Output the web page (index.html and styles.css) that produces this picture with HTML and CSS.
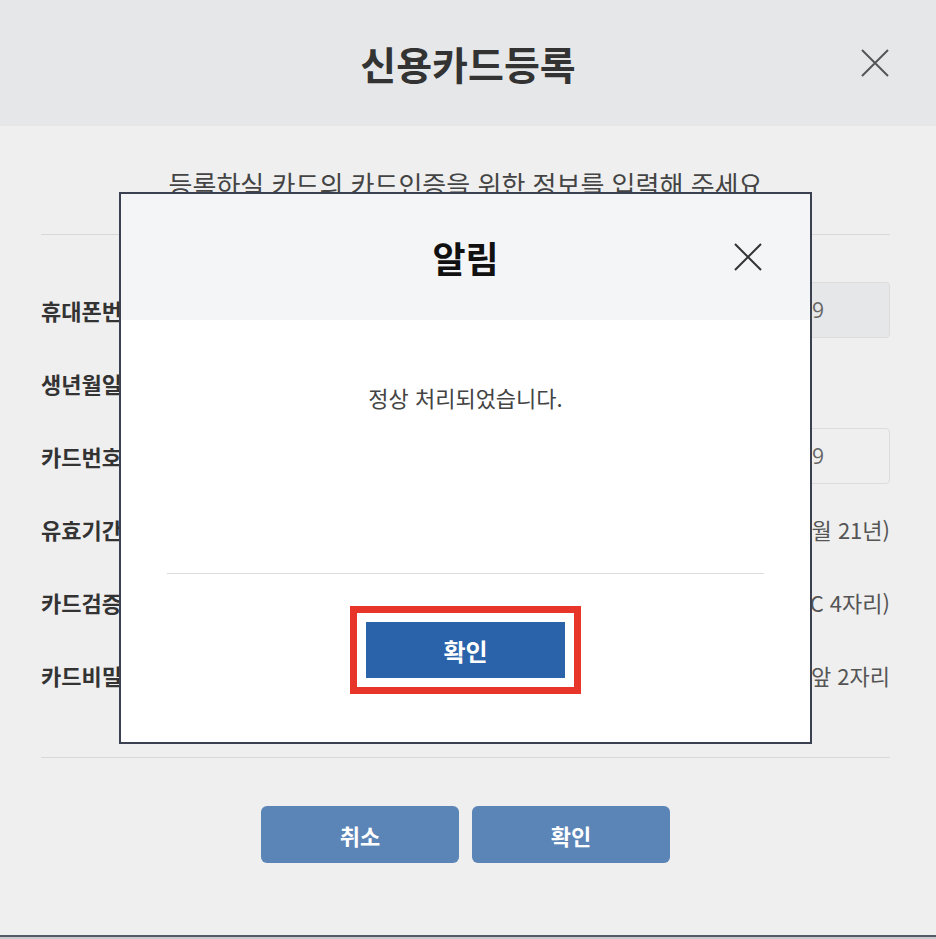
FILE: index.html
```html
<!DOCTYPE html>
<html lang="ko">
<head>
  <meta charset="UTF-8">
  <meta name="viewport" content="width=device-width, initial-scale=1.0">
  <title>신용카드등록</title>
  <link rel="stylesheet" href="styles.css">
</head>
<body>
  <div class="page">
    <header class="page-head">
      <h1>신용카드등록</h1>
      <button class="close-btn" aria-label="닫기">
        <svg viewBox="0 0 28 28" width="28" height="28"><path d="M1 1L27 27M27 1L1 27" stroke="#555" stroke-width="2" fill="none"/></svg>
      </button>
    </header>

    <div class="content">
      <p class="guide">등록하실 카드의 카드인증을 위한 정보를 입력해 주세요</p>

      <div class="form">
        <div class="row">
          <label>휴대폰번호</label>
          <div class="field">
            <input class="box readonly" type="text" value="010" readonly>
            <input class="box readonly" type="text" value="1234" readonly>
            <input class="box readonly" type="text" value="5679" readonly>
          </div>
        </div>
        <div class="row">
          <label>생년월일</label>
          <div class="field start">
            <input class="box wide" type="text" placeholder="예) 990101">
          </div>
        </div>
        <div class="row">
          <label>카드번호</label>
          <div class="field">
            <input class="box" type="text" value="1234">
            <input class="box" type="text" value="5678">
            <input class="box" type="text" value="9012">
            <input class="box" type="text" value="3459">
          </div>
        </div>
        <div class="row">
          <label>유효기간</label>
          <div class="field">
            <span class="note">(예: 10월 21년)</span>
          </div>
        </div>
        <div class="row">
          <label>카드검증</label>
          <div class="field">
            <span class="note">(카드 뒷면 CVC 4자리)</span>
          </div>
        </div>
        <div class="row">
          <label>카드비밀번호</label>
          <div class="field">
            <span class="note">비밀번호 앞 2자리</span>
          </div>
        </div>
      </div>

      <div class="actions">
        <button class="btn">취소</button>
        <button class="btn">확인</button>
      </div>
    </div>
  </div>

  <!-- 알림 팝업 -->
  <div class="modal">
    <div class="modal-head">
      <h2>알림</h2>
      <button class="modal-close" aria-label="닫기">
        <svg viewBox="0 0 28 28" width="28" height="28"><path d="M1 1L27 27M27 1L1 27" stroke="#333" stroke-width="2" fill="none"/></svg>
      </button>
    </div>
    <div class="modal-body">
      <p>정상 처리되었습니다.</p>
    </div>
    <div class="modal-foot">
      <span class="mark">
        <button class="btn-ok">확인</button>
      </span>
    </div>
  </div>
</body>
</html>
```

FILE: styles.css
```css
* {
  margin: 0;
  padding: 0;
  box-sizing: border-box;
}

body {
  font-family: "Noto Sans CJK KR", "Noto Sans", sans-serif;
  background: #c9cbd0;
  color: #333;
  width: 936px;
  height: 939px;
  overflow: hidden;
}

.page {
  height: 937px;
  background: #efefef;
  border-bottom: 2px solid #555a66;
}

.page-head {
  height: 126px;
  background: #e6e7e9;
  display: flex;
  align-items: center;
  justify-content: center;
  position: relative;
}

.page-head h1 {
  font-size: 39px;
  font-weight: 700;
  color: #333;
}

.close-btn {
  position: absolute;
  right: 47px;
  top: 49px;
  width: 28px;
  height: 28px;
  border: none;
  background: none;
}

.close-btn svg, .modal-close svg {
  display: block;
}

.content {
  padding: 0 46px 0 41px;
}

.guide {
  text-align: center;
  font-size: 26px;
  line-height: 32px;
  color: #444;
  padding: 42px 0 0;
  height: 109px;
  border-bottom: 1px solid #d9d9d9;
}

.form {
  padding: 38px 0 46px;
  border-bottom: 1px solid #d9d9d9;
}

.row {
  height: 73px;
  display: flex;
  align-items: center;
}

.row label {
  width: 160px;
  font-size: 22px;
  font-weight: 700;
  color: #333;
}

.field {
  flex: 1;
  display: flex;
  justify-content: flex-end;
  align-items: center;
  gap: 12px;
}

.field.start {
  justify-content: flex-start;
}

.box {
  width: 130px;
  height: 56px;
  border: 1px solid #dcdcdc;
  border-radius: 4px;
  background: #efefef;
  padding: 0 15px;
  font-family: "Open Sans", "Noto Sans CJK KR", sans-serif;
  font-size: 21px;
  color: #666;
}

.box.readonly {
  background: #e6e7e9;
}

.box.wide {
  width: 300px;
}

.note {
  font-size: 22px;
  color: #555;
}

.actions {
  display: flex;
  justify-content: center;
  gap: 13px;
  padding-top: 48px;
}

.btn {
  width: 198px;
  height: 57px;
  border: none;
  border-radius: 6px;
  background: #5b84b7;
  color: #fff;
  font-family: inherit;
  font-size: 22px;
  font-weight: 700;
}

/* 팝업 */
.modal {
  position: absolute;
  left: 119px;
  top: 192px;
  width: 693px;
  height: 552px;
  background: #fff;
  border: 2px solid #3b4150;
}

.modal-head {
  height: 126px;
  background: #f4f5f7;
  display: flex;
  align-items: center;
  justify-content: center;
  position: relative;
}

.modal-head h2 {
  font-size: 36px;
  font-weight: 700;
  color: #111;
}

.modal-close {
  position: absolute;
  right: 48px;
  top: 49px;
  width: 28px;
  height: 28px;
  border: none;
  background: none;
}

.modal-body {
  height: 253px;
  padding-top: 62px;
  text-align: center;
}

.modal-body p {
  font-size: 22px;
  line-height: 30px;
  color: #444;
}

.modal-foot {
  margin: 0 46px;
  border-top: 1px solid #dcdcdc;
  padding-top: 32px;
  display: flex;
  justify-content: center;
}

.mark {
  display: block;
  border: 7px solid #e8352a;
  padding: 9px;
  background: #fff;
}

.btn-ok {
  display: block;
  width: 199px;
  height: 56px;
  border: none;
  background: #2b63ab;
  color: #fff;
  font-family: inherit;
  font-size: 24px;
  font-weight: 700;
}
```
